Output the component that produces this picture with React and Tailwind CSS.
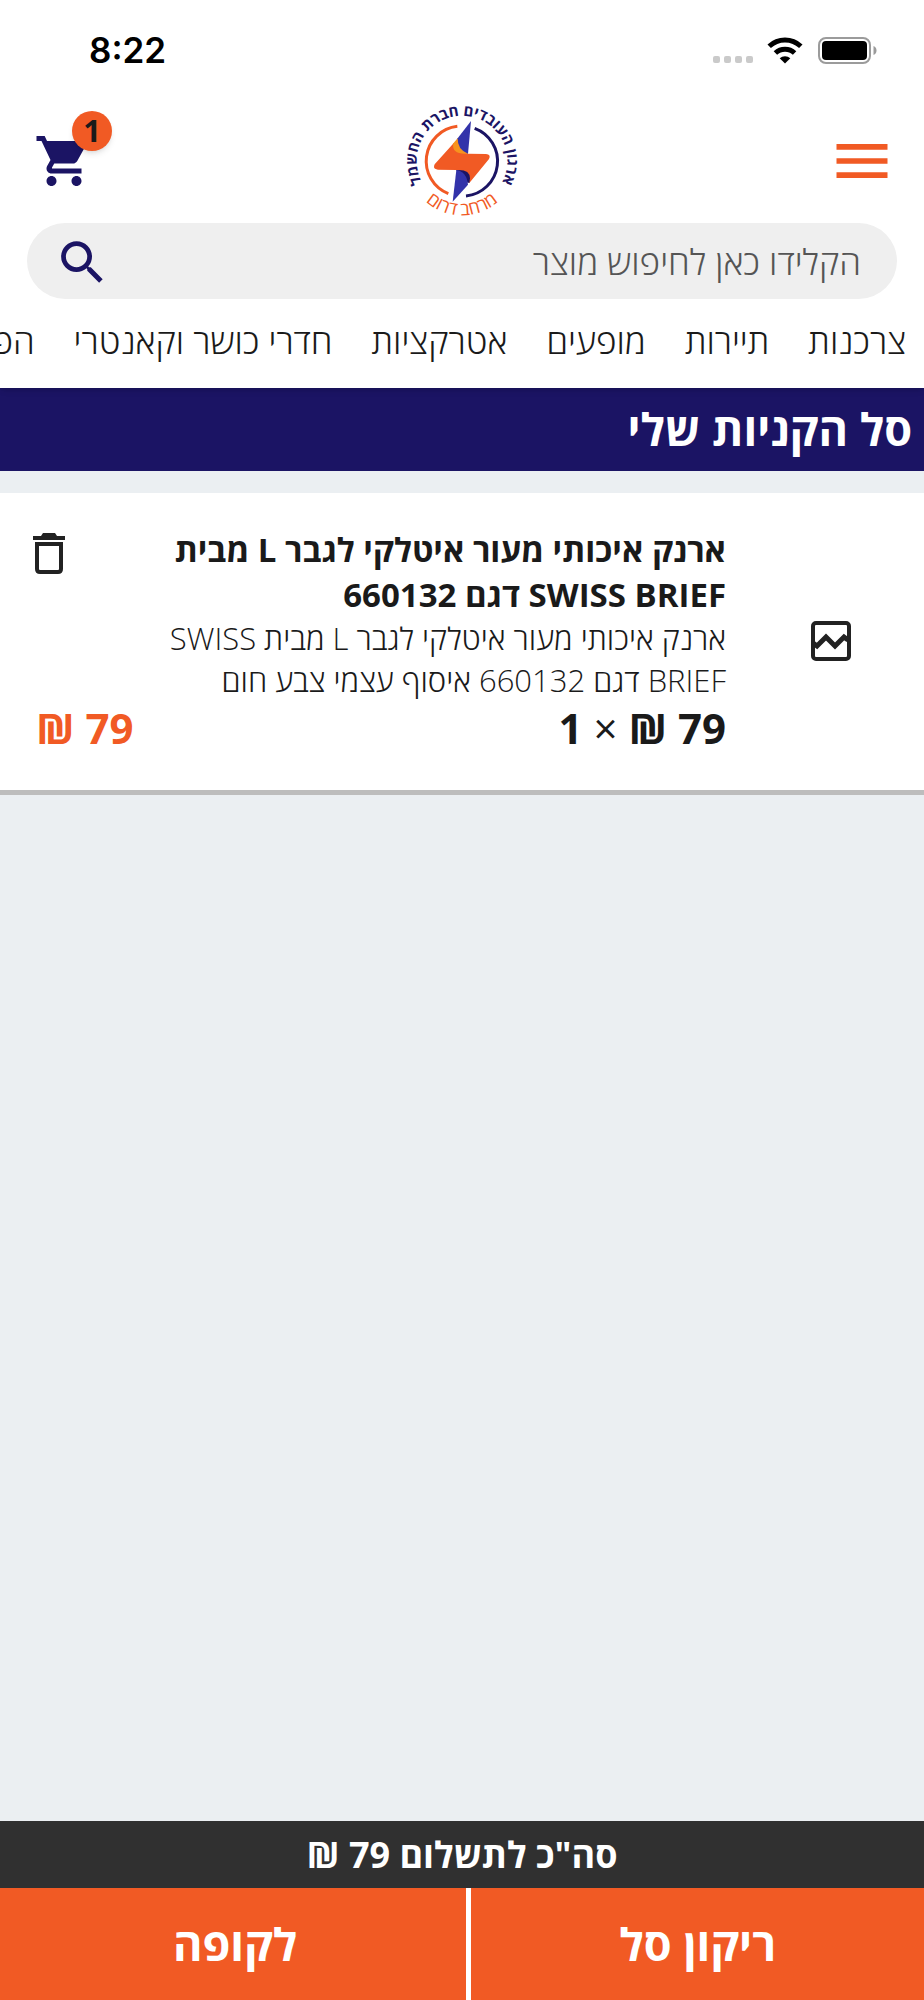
import { useState } from 'react';
import { MdMenu, MdSearch, MdShoppingCart } from 'react-icons/md';

const CATEGORIES = ['צרכנות', 'תיירות', 'מופעים', 'אטרקציות', 'חדרי כושר וקאנטרי', 'הפעלות'];

const CART_ITEMS = [
  {
    id: 660132,
    name: 'ארנק איכותי מעור איטלקי לגבר L מבית SWISS BRIEF דגם 660132',
    description: 'ארנק איכותי מעור איטלקי לגבר L מבית SWISS BRIEF דגם 660132 איסוף עצמי צבע חום',
    price: 79,
    quantity: 1,
  },
];

function StatusBar() {
  return (
    <div dir="ltr" className="flex h-[100px] items-center justify-between pl-[89px] pr-[47px] text-black">
      <span className="font-['Inter'] text-[35px] font-semibold">8:22</span>
      <div className="flex items-center">
        <div className="mt-[18px] mr-[14px] flex gap-1">
          {[0, 1, 2, 3].map(i => (
            <span key={i} className="h-[7px] w-[7px] rounded-xs bg-[#cacaca]" />
          ))}
        </div>
        <svg width="36" height="27" viewBox="0 0 36 27" className="mr-[15px]">
          <g fill="none" stroke="#000" strokeWidth="5">
            <path d="M2.2 9.2a23 23 0 0 1 31.6 0" />
            <path d="M8.4 16a14 14 0 0 1 19.2 0" />
          </g>
          <path d="M18 26.5l-5.3-5.3a8 8 0 0 1 10.6 0z" />
        </svg>
        <svg width="59" height="27" viewBox="0 0 59 27">
          <rect x="1" y="1" width="51" height="25" rx="7" fill="none" stroke="#9b9b9b" strokeWidth="2" />
          <rect x="4" y="4" width="45" height="19" rx="4" />
          <path d="M55.500 9c4 1.500 4 7.500 0 9z" fill="#9b9b9b" />
        </svg>
      </div>
    </div>
  );
}

function Logo() {
  return (
    <svg viewBox="-174 -174 348 348" direction="ltr" className="h-[116px] w-[116px] overflow-visible font-['Open_Sans','Noto_Sans',sans-serif]">
      <defs>
        <path id="logo-top" d="M0 136A136 136 0 0 1 0-136A136 136 0 0 1 0 136" />
        <path id="logo-bottom" d="M-163 0A163 163 0 0 0 163 0" />
      </defs>
      <text fill="#1b1464" fontSize="45" fontWeight="700" textAnchor="middle">
        <textPath href="#logo-top" startOffset="50%">ארגון העובדים חברת החשמל</textPath>
      </text>
      <text fill="#f15a24" fontSize="54" textAnchor="middle">
        <textPath href="#logo-bottom" startOffset="50%">מרחב דרום</textPath>
      </text>
      <g fill="none" strokeWidth="9">
        <path d="M-14-104A105 105 0 0 0-41 98" stroke="#f15a24" />
        <path d="M38-98A105 105 0 0 1 12 105" stroke="#1b1464" />
      </g>
      <path d="M-24-55L-82 10Q-90 25-72 26L-17 27L22 66L81-6Q88-20 72-21L18-22Z" fill="#f15a24" />
      <path d="M-12-70L-26-53Q-32-18 18-22Z" fill="#f7931e" />
      <path d="M27-120L-13-68Q-14-34 18-22Z" fill="#3333aa" />
      <path d="M-17 27Q24 24 24 52L22 66L0 60Z" fill="#1b1464" />
      <path d="M-17 27Q14 32 18 71L-28 122Z" fill="#3333aa" />
    </svg>
  );
}

function Header({ count }) {
  return (
    <header className="grid h-[123px] grid-cols-3 items-center px-7 pb-[2px]">
      <button type="button" aria-label="תפריט" className="justify-self-start text-[#f15a24]">
        <MdMenu size={68} />
      </button>
      <a href="#home" aria-label="דף הבית" className="justify-self-center">
        <Logo />
      </a>
      <button type="button" aria-label="סל קניות" className="relative ml-[6px] justify-self-end text-[#1b1464]">
        <MdShoppingCart size={60} />
        <span className="absolute -top-5 left-[38px] flex h-10 w-10 items-center justify-center rounded-full bg-[#f15a24] text-[31px] leading-none font-bold text-[#1a1a1a] shadow-md">
          {count}
        </span>
      </button>
    </header>
  );
}

function SearchBar() {
  const [query, setQuery] = useState('');

  return (
    <form role="search" onSubmit={e => e.preventDefault()}
      className="mx-[27px] flex h-[76px] items-center rounded-full bg-[#efefef] pt-[3px] pr-9 pl-[27px]">
      <input value={query} onChange={e => setQuery(e.target.value)} aria-label="חיפוש מוצר"
        placeholder="הקלידו כאן לחיפוש מוצר"
        className="min-w-0 flex-1 bg-transparent text-[35px] font-light text-[#1a1a1a] outline-none placeholder:text-[#555]" />
      <button type="submit" aria-label="חיפוש" className="text-[#1b1464]">
        <MdSearch size={57} />
      </button>
    </form>
  );
}

function CategoryNav() {
  return (
    <nav className="flex h-[89px] items-center gap-[39px] overflow-hidden pr-[18px] pb-1">
      {CATEGORIES.map(name => (
        <a key={name} href="#category" className="shrink-0 text-[35px] font-light whitespace-nowrap">{name}</a>
      ))}
    </nav>
  );
}

function CartItem({ item, onRemove }) {
  return (
    <li className="flex border-b-[5px] border-[#bdbdbd] bg-white pt-[34px] pb-9">
      <div className="flex w-[198px] shrink-0 items-center justify-center pl-3">
        <svg width="40" height="40" viewBox="0 0 40 40" fill="none" stroke="#222" strokeWidth="4">
          <rect x="2" y="2" width="36" height="36" rx="3" />
          <path d="M2 22l4 3 9-9 9 9 9-9 4 3" strokeWidth="5" />
        </svg>
      </div>
      <div className="min-w-0 flex-1">
        <div className="flex items-start">
          <div className="min-w-0 flex-1">
            <h2 className="text-[33px] leading-[45px] font-bold">{item.name}</h2>
            <p className="text-[31px] leading-[42px] font-light">{item.description}</p>
          </div>
          <div className="flex w-[150px] shrink-0 justify-end pt-[6px] pl-[33px]">
            <button type="button" aria-label="הסרה מהסל" onClick={() => onRemove(item.id)}>
              <svg width="32" height="41" viewBox="0 0 32 41" fill="none" stroke="#222" strokeWidth="4">
                <path d="M0 3h8l2-3h12l2 3h8v4H0z" fill="#222" stroke="none" />
                <path d="M4 11h24v25q0 3-3 3H7q-3 0-3-3z" />
              </svg>
            </button>
          </div>
        </div>
        <div className="flex justify-between pl-9 text-[42px] leading-[53px] font-bold">
          <span>{item.price} ₪ <span className="font-normal">×</span> {item.quantity}</span>
          <span className="text-[#f15a24]">{item.price} ₪</span>
        </div>
      </div>
    </li>
  );
}

export default function App() {
  const [items, setItems] = useState(CART_ITEMS);
  const count = items.reduce((s, i) => s + i.quantity, 0);
  const total = items.reduce((s, i) => s + i.price * i.quantity, 0);

  return (
    <div dir="rtl" className="flex min-h-screen flex-col bg-[#ebeff2] font-['Open_Sans','Noto_Sans',sans-serif] text-[#1a1a1a]">
      <div className="relative bg-white shadow-md">
        <StatusBar />
        <Header count={count} />
        <SearchBar />
        <CategoryNav />
      </div>

      <h1 className="h-[83px] bg-[#1b1464] px-3 text-[45px] leading-[82px] font-bold text-white">סל הקניות שלי</h1>

      <ul className="mt-[22px] flex-1">
        {items.map(item => (
          <CartItem key={item.id} item={item} onRemove={id => setItems(items.filter(i => i.id !== id))} />
        ))}
      </ul>

      <footer className="font-bold text-white">
        <p className="bg-[#303030] text-center text-[36px] leading-[67px]">סה"כ לתשלום {total} ₪</p>
        <div className="flex h-[112px] gap-[5px] bg-white text-[45px]">
          <button type="button" onClick={() => setItems([])} className="w-[49%] bg-[#f15a24]">ריקון סל</button>
          <button type="button" className="flex-1 bg-[#f15a24] pl-1">לקופה</button>
        </div>
      </footer>
    </div>
  );
}
